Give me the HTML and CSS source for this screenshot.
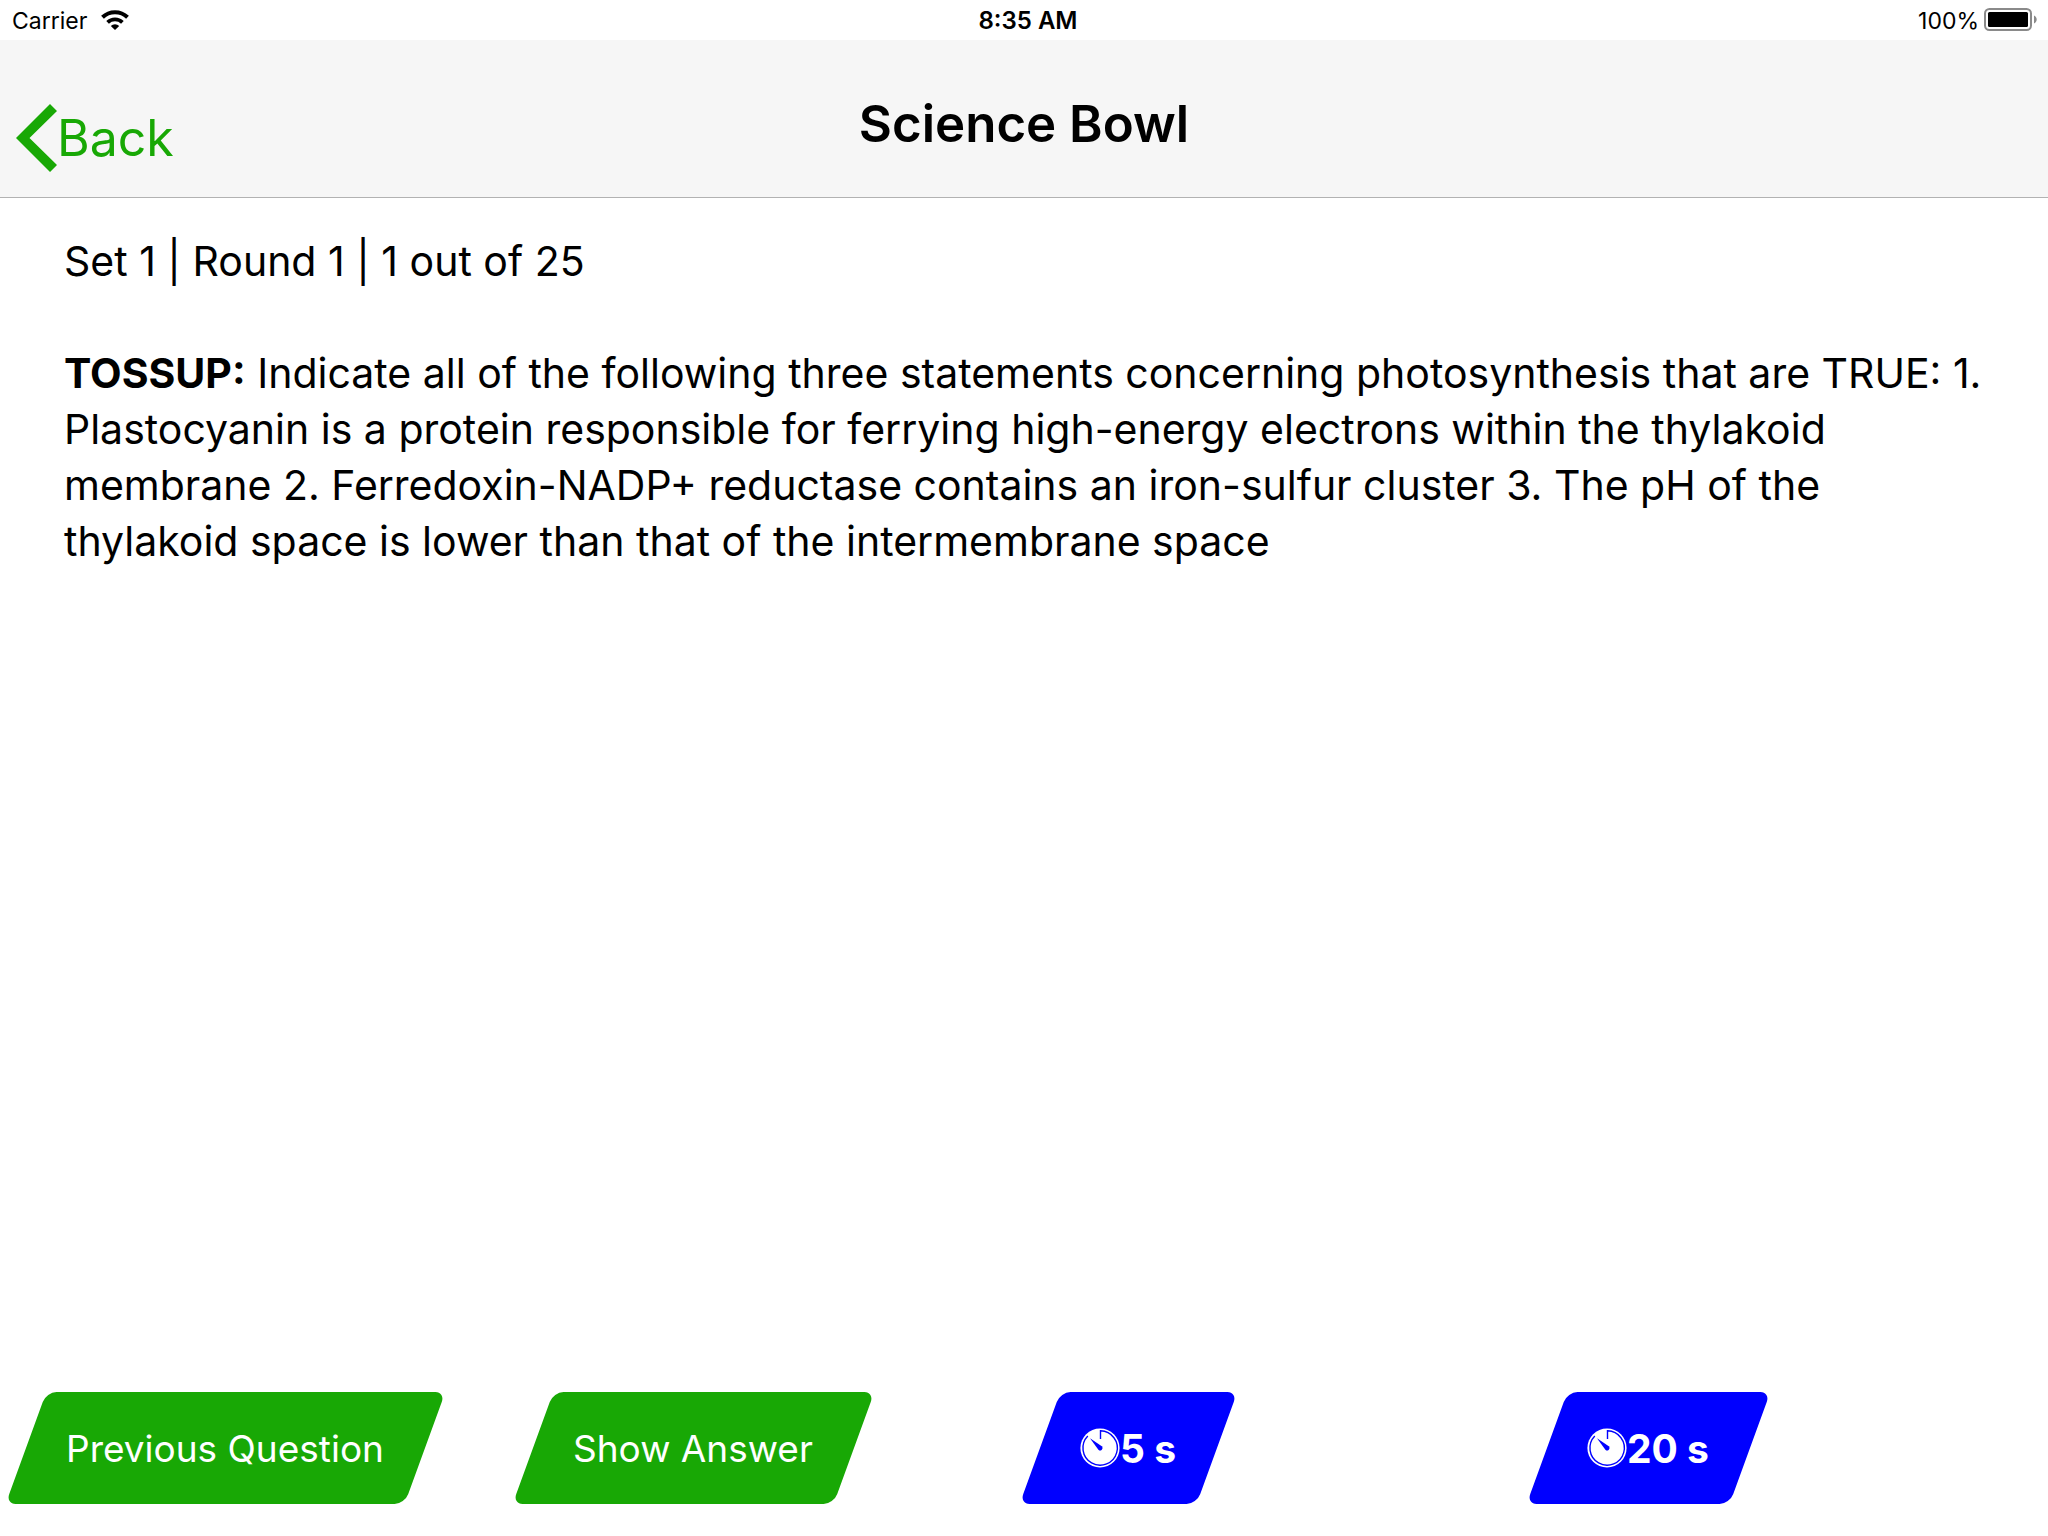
FILE: index.html
```html
<!DOCTYPE html>
<html lang="en">
<head>
<meta charset="utf-8">
<meta name="viewport" content="width=device-width, initial-scale=1">
<title>Science Bowl</title>
<link rel="stylesheet" href="styles.css">
</head>
<body>
<div class="status">
  <div class="status-side">
    <span class="status-text">Carrier</span>
    <svg class="wifi" viewBox="0 0 28 20" aria-hidden="true">
      <path d="M1.500 7.200A18 18 0 0 1 26.500 7.200" fill="none" stroke="#000" stroke-width="4"/>
      <path d="M6.600 12.400A10.600 10.600 0 0 1 21.400 12.400" fill="none" stroke="#000" stroke-width="3.800"/>
      <path d="M14 20L9.800 15.900A6 6 0 0 1 18.200 15.900Z"/>
    </svg>
  </div>
  <span class="status-text clock">8:35 AM</span>
  <div class="status-side status-end">
    <span class="status-text">100%</span>
    <svg class="battery" viewBox="0 0 54 24" aria-hidden="true">
      <rect x="1" y="1" width="46" height="21" rx="4.500" fill="none" stroke="#8a8a8a" stroke-width="2"/>
      <rect x="4" y="4" width="40" height="15" rx="1.500"/>
      <path d="M50 7.500C53.600 9 53.600 14 50 15.500Z" fill="#8a8a8a"/>
    </svg>
  </div>
</div>
<header class="navbar">
  <button class="back" type="button">
    <svg class="chevron" viewBox="0 0 41 68" aria-hidden="true"><path d="M34 0L41 7L13.500 34L41 61L34 68L0 34Z" fill="#18a805"/></svg>
    <span>Back</span>
  </button>
  <h1 class="title">Science Bowl</h1>
</header>
<main class="question">
  <p>Set 1 | Round 1 | 1 out of 25</p>
  <p><strong>TOSSUP:</strong> Indicate all of the following three statements concerning photosynthesis that are TRUE: 1. Plastocyanin is a protein responsible for ferrying high-energy electrons within the thylakoid membrane 2. Ferredoxin-NADP+ reductase contains an iron-sulfur cluster 3. The pH of the thylakoid space is lower than that of the intermembrane space</p>
</main>
<footer class="actions">
  <button class="action" type="button">Previous Question</button>
  <button class="action" type="button">Show Answer</button>
  <button class="action timer" type="button">
    <svg class="dial" viewBox="0 0 40 40" aria-hidden="true">
      <circle cx="20" cy="20" r="19.600" fill="#fff"/>
      <path d="M20.500 11V2.800A17.200 17.200 0 1 1 7.800 8" fill="none" stroke="#00f" stroke-width="1.400"/>
      <path d="M10 10.300L21.800 18.300A2.400 2.400 0 0 1 18.400 21.700Z" fill="#00f"/>
    </svg><span>5 s</span>
  </button>
  <button class="action timer" type="button">
    <svg class="dial" viewBox="0 0 40 40" aria-hidden="true">
      <circle cx="20" cy="20" r="19.600" fill="#fff"/>
      <path d="M20.500 11V2.800A17.200 17.200 0 1 1 7.800 8" fill="none" stroke="#00f" stroke-width="1.400"/>
      <path d="M10 10.300L21.800 18.300A2.400 2.400 0 0 1 18.400 21.700Z" fill="#00f"/>
    </svg><span>20 s</span>
  </button>
</footer>
</body>
</html>
```
FILE: styles.css
```css
* {
  box-sizing: border-box;
}

body {
  margin: 0;
  min-height: 100vh;
  display: flex;
  flex-direction: column;
  background: #fff;
  color: #000;
  font-family: Inter, "Liberation Sans", sans-serif;
}

button {
  border: 0;
  padding: 0;
  background: none;
  font: inherit;
  cursor: pointer;
}

.status {
  display: grid;
  grid-template-columns: 1fr auto 1fr;
  align-items: center;
  height: 40px;
  padding: 0 10px 0 12px;
  font-size: 23px;
}

.status-side {
  display: flex;
  align-items: center;
  gap: 14px;
}

.status-end {
  justify-content: flex-end;
  gap: 5px;
}

.status-text {
  padding-top: 2px;
  line-height: 38px;
}

.clock {
  padding-left: 6px;
  font-size: 24px;
  font-weight: 600;
}

.wifi {
  width: 28px;
  height: 20px;
}

.battery {
  width: 54px;
  height: 24px;
}

.navbar {
  display: grid;
  grid-template-columns: 1fr auto 1fr;
  height: 158px;
  padding: 50px 16px 0;
  background: #f6f6f6;
  border-bottom: 1px solid #b2b2b2;
}

.back {
  display: flex;
  align-items: center;
  justify-self: start;
  align-self: start;
  height: 96px;
  color: #18a805;
  font-size: 50px;
}

.chevron {
  width: 41px;
  height: 68px;
}

.title {
  margin: 0;
  font-size: 51px;
  font-weight: 600;
  line-height: 68px;
}

.question {
  flex: 1;
  padding: 35px 64px;
  font-size: 41px;
  line-height: 56px;
}

.question p {
  margin: 0 0 56px;
}

.actions {
  display: grid;
  grid-template-columns: repeat(4, 1fr);
  padding: 0 0 32px 20px;
}

.action {
  position: relative;
  z-index: 0;
  justify-self: start;
  display: flex;
  align-items: center;
  height: 112px;
  margin-left: 6px;
  padding: 0 41px 0 40px;
  color: #fff;
  font-size: 37px;
}

.action::before {
  content: "";
  position: absolute;
  inset: 0;
  z-index: -1;
  border-radius: 10px;
  background: #18a805;
  transform: skewX(-20deg);
}

.timer {
  font-size: 39px;
  font-weight: 700;
}

.timer::before {
  background: #00f;
}

.dial {
  width: 40px;
  height: 40px;
}
```
